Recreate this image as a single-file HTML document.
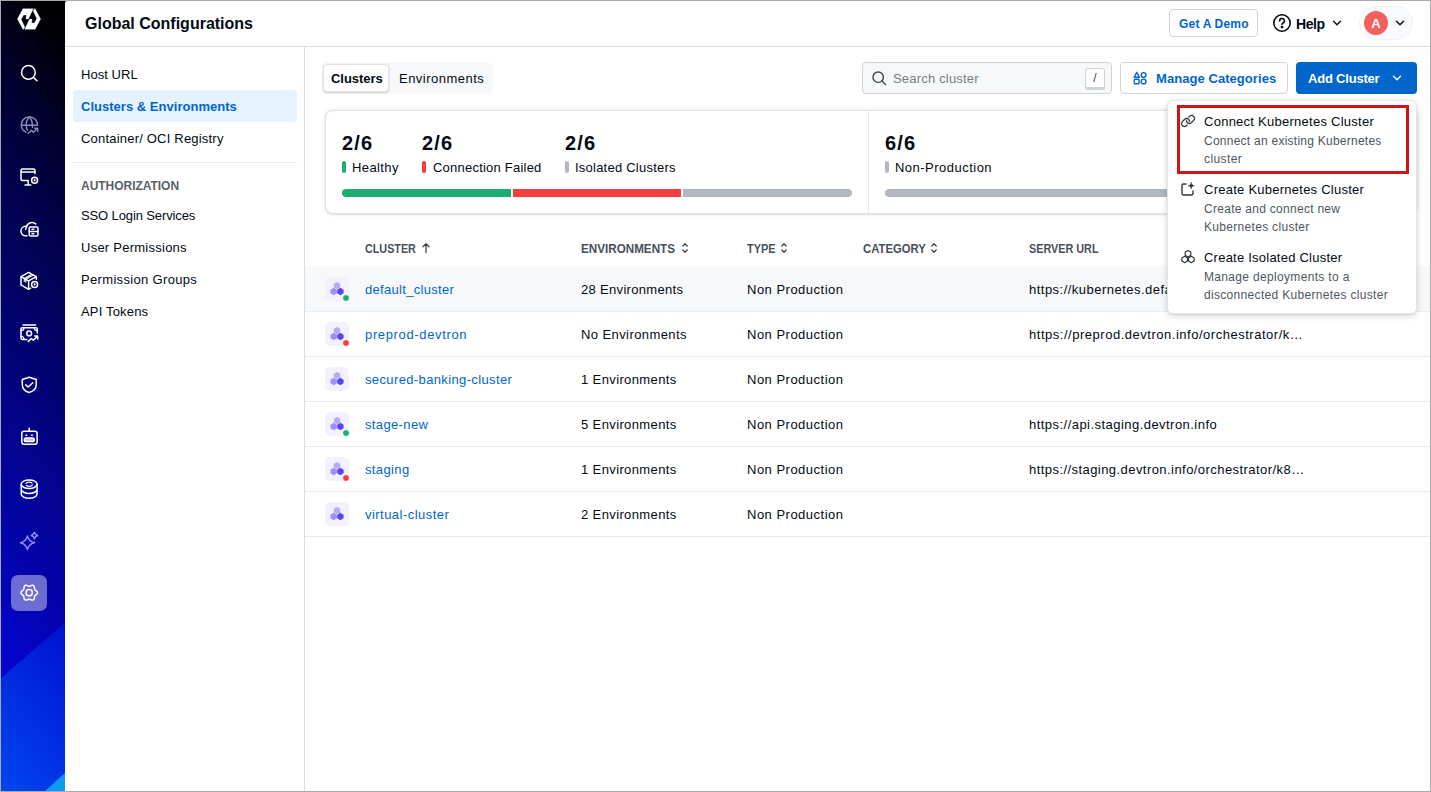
<!DOCTYPE html>
<html lang="en">
<head>
<meta charset="utf-8">
<title>Global Configurations</title>
<style>
*{box-sizing:border-box;margin:0;padding:0}
html,body{width:1431px;height:792px;overflow:hidden;background:#fff}
body{font-family:"Liberation Sans",sans-serif;font-size:13px;color:#000a14;position:relative}
.abs{position:absolute}
.t{position:absolute;white-space:nowrap;line-height:20px}
.sb{font-weight:700}
#frame{position:absolute;left:0;top:0;width:1431px;height:792px;border:1px solid #a9a9a9;z-index:100;pointer-events:none}
/* sidebar */
#side{position:absolute;left:0;top:0;width:80px;height:792px;background:#000008;overflow:hidden}
svg.ic{position:absolute;left:19px;width:20px;height:20px;fill:none;stroke:#fff;stroke-width:1.5;stroke-linecap:round;stroke-linejoin:round}
#main{position:absolute;left:65px;top:1px;width:1366px;height:791px;background:#fff;border-top-left-radius:2px}
#hdr{position:absolute;left:65px;top:1px;width:1366px;height:46px;border-bottom:1px solid #d9dde2;border-top-left-radius:2px}
#nav{position:absolute;left:65px;top:47px;width:240px;height:745px;border-right:1px solid #d9dde2}
.btn{position:absolute;border:1px solid #d0d4d9;border-radius:4px;background:#fff}
.row{position:absolute;left:305px;width:1126px;height:46px;border-bottom:1px solid #e8ebf0}
.tile{position:absolute;left:325px;width:24px;height:24px;border-radius:5px;background:#f3f0ff}
.dot{position:absolute;width:8px;height:8px;border-radius:50%;border:1px solid #fff}
.lnk{color:#0066cc}
.th{position:absolute;white-space:nowrap;line-height:20px;font-size:12px;font-weight:700;color:#47505a;top:239px;transform-origin:0 0}
.mk{position:absolute;width:4px;height:12px;border-radius:2px;top:161px}
.big{position:absolute;white-space:nowrap;font-size:20px;font-weight:700;line-height:30px;top:128px;color:#000a14}
.lbl{position:absolute;white-space:nowrap;line-height:20px;top:158px}
.bar{position:absolute;top:189px;height:8px}
.dt{position:absolute;left:1204px;white-space:nowrap;line-height:20px;font-size:13px;color:#000a14}
.dd{position:absolute;left:1204px;white-space:nowrap;line-height:18px;font-size:12px;color:#4d565e}
</style>
</head>
<body>
<div id="side">
<svg class="abs" style="left:0;top:0" width="66" height="792" viewBox="0 0 66 792">
<defs>
<linearGradient id="gv" x1="65" y1="0" x2="-358.400" y2="326.100" gradientUnits="userSpaceOnUse"><stop offset="0.000" stop-color="rgb(0,0,0)"/><stop offset="0.056" stop-color="rgb(0,0,8)"/><stop offset="0.159" stop-color="rgb(1,1,42)"/><stop offset="0.267" stop-color="rgb(1,1,72)"/><stop offset="0.350" stop-color="rgb(2,2,90)"/><stop offset="0.458" stop-color="rgb(2,2,114)"/><stop offset="0.571" stop-color="rgb(3,3,142)"/><stop offset="0.692" stop-color="rgb(3,3,170)"/><stop offset="0.804" stop-color="rgb(4,4,198)"/><stop offset="1.000" stop-color="rgb(5,5,244)"/></linearGradient>
<linearGradient id="gb" x1="65" y1="623" x2="-56.900" y2="721.400" gradientUnits="userSpaceOnUse">
<stop offset="0" stop-color="#0012cd"/><stop offset="1" stop-color="#0046f0"/>
</linearGradient>
</defs>
<rect width="66" height="792" fill="url(#gv)"/>
<polygon points="66,622 0,679 0,792 66,792" fill="url(#gb)"/>
<polygon points="66,772 44,792 66,792" fill="#0a9cf0"/>
</svg>
</div>
<!-- sidebar icons -->
<svg class="abs" style="left:16.400px;top:7.400px" width="26" height="24" viewBox="-13 -12 26 24" fill="#fff" stroke="#fff" stroke-width=".3" stroke-linejoin="round"><polygon points="-11.6,0 -6.1,-10.3 4.3,-10.3 -0.6,-0.1 -3.1,-0.1 -2.6,-4 -5.4,-4 -7.8,0.6 -4.2,8 -5.5,10.3 -6.1,10.3"/><polygon points="11.6,0 6.1,10.3 -4.3,10.3 0.6,0.1 3.1,0.1 2.6,4 5.4,4 7.8,-0.6 4.2,-8 5.5,-10.3 6.1,-10.3"/></svg>
<div id="icons">
<div class="abs" style="left:11px;top:575px;width:36px;height:36px;border-radius:7px;background:rgba(255,255,255,.42)"></div>
<svg class="abs" style="left:0;top:0" width="66" height="792" viewBox="0 0 66 792" fill="none" stroke="#fff" stroke-width="1.500" stroke-linecap="round" stroke-linejoin="round">
<g><circle cx="28.400" cy="72.400" r="6.850"/><path d="M33.400 77.400 37 80.700"/></g>
<g stroke="#8c8cba" stroke-width="1.400"><path d="M37.500 124.800A8.100 8.100 0 1 0 25.900 132.300"/><path d="M21.400 125.300H37.400M29.400 116.900C26.600 119.500 26 122.500 26.200 125.500 26.300 127.500 26.800 129 27.500 130.300M29.400 116.900C32 119.500 32.600 122.500 32.500 127.300"/><path d="M28.100 133.400 31.400 130.300 33.300 132.200 37.400 128.500M34.700 128.200 37.600 128.200 37.800 131.300"/></g>
<g><path d="M35 173.400V170.500A1.500 1.500 0 0 0 33.500 169H22.500A1.500 1.500 0 0 0 21 170.500V179A1.500 1.500 0 0 0 22.500 180.500H28.200V185.100M25 185.100H30.700M21 172H35"/><circle cx="34.600" cy="180.200" r="3"/><path d="M34 179.100v2.200l1.800-1.100z" fill="#fff" stroke-width=".5"/></g>
<g><path d="M27 235.800H25.700A4.750 4.750 0 1 1 25.700 226.300C26.100 226.300 26.500 226.350 26.800 226.450"/><path d="M25.700 229.200C26 225.700 28.500 222.500 32 222.500 33.400 222.500 34.700 223 35.700 223.900"/><rect x="29.200" y="227" width="8.800" height="9" rx="1.300"/><path d="M29.200 231.500H38M32 229.300H33.800M32 233.700H33.800"/></g>
<g><path d="M36.300 279.300V276.600L28.600 272.400 21 276.600V284.900L28.600 289.300 30.700 288.200M21 276.600 28.600 280.800 36.300 276.600M28.600 280.800V289.300"/><path d="M24.300 281.200V278.400L31.800 274.200M25.800 282V279.200L33.300 275" stroke-width="1.200"/><circle cx="34.600" cy="284.400" r="3"/><path d="M34 283.300v2.200l1.800-1.100z" fill="#fff" stroke-width=".5"/></g>
<g><path d="M23.100 325H35.600"/><path d="M37.300 333V329A1.300 1.300 0 0 0 36 327.700H22.300A1.300 1.300 0 0 0 21 329V338.100A1.300 1.300 0 0 0 22.300 339.400H26.900"/><circle cx="29.150" cy="333.400" r="2.400"/><path d="M21 330.700A3 3 0 0 0 24 327.700M37.300 330.700A3 3 0 0 1 34.300 327.700M21 336.400A3 3 0 0 1 24 339.400" stroke-width="1.200"/><path d="M28.300 341.400 31.400 338.500 33.300 340.200 37.300 336.400M34.700 335.900 37.600 335.900 37.800 339"/></g>
<g><path d="M29.150 377.200 22.300 379.500V384.700C22.300 388.700 25.200 391.300 29.150 392.500 33.100 391.300 36.200 388.700 36.200 384.700V379.500Z"/><path d="M25.700 384.900 28.200 387 32.800 382.800"/></g>
<g><rect x="21.800" y="431.300" width="15.300" height="12.900" rx="2.200"/><path d="M29.300 431.300V428.300"/><rect x="24.300" y="437.900" width="10" height="3.700" rx="1.850" fill="rgba(255,255,255,.75)"/><circle cx="26.300" cy="435.300" r=".95" fill="#fff" stroke="none"/><circle cx="32" cy="435.300" r=".95" fill="#fff" stroke="none"/></g>
<g><ellipse cx="29.150" cy="484.200" rx="7.900" ry="4.300"/><path d="M21.250 484.200V494C21.250 496.400 24.800 498.300 29.150 498.300S37.050 496.400 37.050 494V484.200M21.250 489.200C21.250 491.600 24.800 493.500 29.150 493.500S37.050 491.600 37.050 489.200"/><path d="M26 483.500C26.800 482.300 28.800 481.900 30.600 482.400L32 483M32.300 485C31.500 486.200 29.500 486.600 27.700 486.100L26.300 485.500" stroke-width="1.300"/></g>
<g stroke="#8f8bf2" stroke-width="1.400"><path d="M27.45 536.0 Q28.849999999999998 541.4399999999999 34.45 542.8 Q28.849999999999998 544.16 27.45 549.5999999999999 Q26.05 544.16 20.45 542.8 Q26.05 541.4399999999999 27.45 536.0Z"/><path d="M34.45 532.3 Q35.25 534.7 37.650000000000006 535.5 Q35.25 536.3 34.45 538.7 Q33.650000000000006 536.3 31.250000000000004 535.5 Q33.650000000000006 534.7 34.45 532.3Z"/></g>
<g><circle cx="29.200" cy="592.700" r="3.150"/><path d="M37.50 592.70 L37.34 593.41 L36.91 594.06 L36.30 594.60 L35.66 595.05 L35.12 595.46 L34.74 595.90 L34.55 596.44 L34.47 597.12 L34.40 597.90 L34.23 598.69 L33.89 599.39 L33.35 599.89 L32.65 600.11 L31.88 600.05 L31.10 599.80 L30.39 599.47 L29.77 599.20 L29.20 599.10 L28.63 599.20 L28.01 599.47 L27.30 599.80 L26.52 600.05 L25.75 600.11 L25.05 599.89 L24.51 599.39 L24.17 598.69 L24.00 597.90 L23.93 597.12 L23.85 596.44 L23.66 595.90 L23.28 595.46 L22.74 595.05 L22.10 594.60 L21.49 594.06 L21.06 593.41 L20.90 592.70 L21.06 591.99 L21.49 591.34 L22.10 590.80 L22.74 590.35 L23.28 589.94 L23.66 589.50 L23.85 588.96 L23.93 588.28 L24.00 587.50 L24.17 586.71 L24.51 586.01 L25.05 585.51 L25.75 585.29 L26.52 585.35 L27.30 585.60 L28.01 585.93 L28.63 586.20 L29.20 586.30 L29.77 586.20 L30.39 585.93 L31.10 585.60 L31.88 585.35 L32.65 585.29 L33.35 585.51 L33.89 586.01 L34.23 586.71 L34.40 587.50 L34.47 588.28 L34.55 588.96 L34.74 589.50 L35.12 589.94 L35.66 590.35 L36.30 590.80 L36.91 591.34 L37.34 591.99Z"/></g>
</svg>
</div>
<div id="main"></div>
<div id="hdr"></div>
<!-- header -->
<div class="t sb" id="title" style="left:85px;top:13px;font-size:16px;line-height:22px">Global Configurations</div>
<div class="btn" style="left:1169px;top:9px;width:89px;height:28px"></div>
<div class="t sb lnk" id="demo" style="left:1179px;top:14px;font-size:12px;letter-spacing:0.19px">Get A Demo</div>
<svg class="abs" style="left:1271.700px;top:12.500px" width="20" height="20" viewBox="0 0 20 20" fill="none" stroke="#000a14" stroke-width="1.6" stroke-linecap="round" stroke-linejoin="round"><circle cx="10" cy="10" r="8.2"/><path d="M7.6 7.9a2.4 2.4 0 1 1 3.3 2.2c-.6.3-.9.7-.9 1.4"/><circle cx="10" cy="14.1" r=".6" fill="#000a14"/></svg>
<div class="t sb" id="help" style="left:1296px;top:13.5px;font-size:14px;letter-spacing:-0.4px">Help</div>
<svg class="abs" style="left:1331px;top:17px" width="12" height="12" viewBox="0 0 12 12" fill="none" stroke="#000a14" stroke-width="1.4" stroke-linecap="round" stroke-linejoin="round"><path d="M2.5 4.3 6 7.8l3.5-3.5"/></svg>
<div class="abs" style="left:1359px;top:6px;width:54px;height:34px;border-radius:17px;background:#f9fafb;border:1px solid #eff1f5"></div>
<div class="abs" style="left:1364px;top:11px;width:24px;height:24px;border-radius:50%;background:#f3615e"></div>
<div class="t" id="ava" style="left:1364px;top:14px;width:24px;text-align:center;color:#fff;font-size:13px;font-weight:700">A</div>
<svg class="abs" style="left:1394px;top:17px" width="12" height="12" viewBox="0 0 12 12" fill="none" stroke="#000a14" stroke-width="1.4" stroke-linecap="round" stroke-linejoin="round"><path d="M2.5 4.3 6 7.8l3.5-3.5"/></svg>
<div id="nav"></div>
<!-- nav -->
<div class="abs" style="left:73px;top:90px;width:224px;height:32px;border-radius:4px;background:#e5f2ff"></div>
<div class="t" id="n1" style="left:81px;top:65px;letter-spacing:0.04px">Host URL</div>
<div class="t sb lnk" id="n2" style="left:81px;top:97px;letter-spacing:0.02px">Clusters &amp; Environments</div>
<div class="t" id="n3" style="left:81px;top:129px;letter-spacing:0.2px">Container/ OCI Registry</div>
<div class="abs" style="left:73px;top:162px;width:224px;height:1px;background:#e8ebf0"></div>
<div class="t sb" id="n4" style="left:81px;top:176px;font-size:12px;color:#596168;letter-spacing:-0.03px">AUTHORIZATION</div>
<div class="t" id="n5" style="left:81px;top:206px;letter-spacing:-0.12px">SSO Login Services</div>
<div class="t" id="n6" style="left:81px;top:238px;letter-spacing:0.25px">User Permissions</div>
<div class="t" id="n7" style="left:81px;top:270px;letter-spacing:0.33px">Permission Groups</div>
<div class="t" id="n8" style="left:81px;top:302px;letter-spacing:0.17px">API Tokens</div>
<!-- toolbar -->
<div class="abs" style="left:322px;top:62px;width:171px;height:32px;border-radius:6px;background:#f7f8fa"></div>
<div class="abs" style="left:323px;top:64px;width:66px;height:28px;border-radius:4px;background:#fff;border:1px solid #e0e3e8;box-shadow:0 1px 2px rgba(0,0,0,.18)"></div>
<div class="t sb" id="tab1" style="left:331px;top:69px;letter-spacing:-0.04px">Clusters</div>
<div class="t" id="tab2" style="left:399px;top:69px;letter-spacing:0.48px">Environments</div>
<div class="abs" style="left:862px;top:62px;width:250px;height:32px;border-radius:4px;background:#f7f8fa;border:1px solid #d0d4d9"></div>
<svg class="abs" style="left:871px;top:70px" width="16" height="16" viewBox="0 0 16 16" fill="none" stroke="#3b444c" stroke-width="1.4" stroke-linecap="round"><circle cx="7.200" cy="7.200" r="5.200"/><path d="M11 11l3.500 3.500"/></svg>
<div class="t" id="ph" style="left:893px;top:69px;color:#767d84;letter-spacing:0.19px">Search cluster</div>
<div class="abs" style="left:1085px;top:68px;width:20px;height:22px;border-radius:3px;background:#fff;border:1px solid #d0d4d9;border-bottom-width:3px"></div>
<div class="t" style="left:1085px;top:68px;width:20px;text-align:center;font-size:12px;color:#3b444c">/</div>
<div class="btn" style="left:1120px;top:62px;width:168px;height:32px"></div>
<svg class="abs" style="left:1132px;top:70px" width="16" height="16" viewBox="0 0 16 16" fill="none" stroke="#0066cc" stroke-width="1.4" stroke-linejoin="round"><path d="M4.750 2.300 7.400 7.300H2.100z"/><circle cx="11.600" cy="5" r="2.400"/><rect x="2.200" y="9.200" width="4.900" height="4.600" rx=".8"/><circle cx="11.600" cy="11.500" r="2.400"/></svg>
<div class="t sb lnk" id="mc" style="left:1156px;top:69px;letter-spacing:0.06px">Manage Categories</div>
<div class="abs" style="left:1296px;top:62px;width:121px;height:32px;border-radius:4px;background:#0066cc"></div>
<div class="t sb" id="ac" style="left:1308px;top:69px;color:#fff;letter-spacing:-0.2px">Add Cluster</div>
<svg class="abs" style="left:1391px;top:72px" width="12" height="12" viewBox="0 0 12 12" fill="none" stroke="#fff" stroke-width="1.4" stroke-linecap="round" stroke-linejoin="round"><path d="M2.500 4.300 6 7.800l3.500-3.500"/></svg>
<!-- summary card -->
<div class="abs" id="card" style="left:325px;top:110px;width:1092px;height:104px;border-radius:8px;background:#fff;border:1px solid #dfe2e6;box-shadow:0 0 4px rgba(0,0,0,.13),0 1px 2px rgba(0,0,0,.06)"></div>
<div class="abs" style="left:868px;top:111px;width:1px;height:102px;background:#e8ebf0"></div>
<div class="big" id="b1" style="left:342px;letter-spacing:1.13px">2/6</div>
<div class="big" id="b2" style="left:422px;letter-spacing:1.13px">2/6</div>
<div class="big" id="b3" style="left:565px;letter-spacing:1.13px">2/6</div>
<div class="big" id="b4" style="left:885px;letter-spacing:1.13px">6/6</div>
<div class="mk" style="left:342px;background:#1dad70"></div>
<div class="mk" style="left:422px;background:#f33e3e"></div>
<div class="mk" style="left:565px;background:#b1b7bc"></div>
<div class="mk" style="left:885px;background:#b1b7bc"></div>
<div class="lbl" id="l1" style="left:352px;letter-spacing:0.39px">Healthy</div>
<div class="lbl" id="l2" style="left:433px;letter-spacing:0.22px">Connection Failed</div>
<div class="lbl" id="l3" style="left:575px;letter-spacing:0.23px">Isolated Clusters</div>
<div class="lbl" id="l4" style="left:895px;letter-spacing:0.48px">Non-Production</div>
<div class="bar" style="left:342px;width:169px;background:#1dad70;border-radius:4px 0 0 4px"></div>
<div class="bar" style="left:513px;width:168px;background:#f33e3e"></div>
<div class="bar" style="left:683px;width:169px;background:#b1b7bc;border-radius:0 4px 4px 0"></div>
<div class="bar" style="left:885px;width:515px;background:#b1b7bc;border-radius:4px"></div>
<!-- table -->
<div class="th" id="h1" style="left:365px;transform:scaleX(0.898)">CLUSTER</div>
<svg class="abs" style="left:420px;top:241px" width="12" height="14" viewBox="0 0 12 14" fill="none" stroke="#3b444c" stroke-width="1.3" stroke-linecap="round" stroke-linejoin="round"><path d="M6 11.500V3M3 5.800 6 2.800l3 3"/></svg>
<div class="th" id="h2" style="left:581px;transform:scaleX(0.972)">ENVIRONMENTS</div>
<svg class="abs" style="left:680px;top:241px" width="10" height="14" viewBox="0 0 10 14" fill="none" stroke="#3b444c" stroke-width="1.3" stroke-linecap="round" stroke-linejoin="round"><path d="M2.800 5 5 2.800 7.200 5M2.800 9 5 11.200 7.200 9"/></svg>
<div class="th" id="h3" style="left:747px;transform:scaleX(0.907)">TYPE</div>
<svg class="abs" style="left:779px;top:241px" width="10" height="14" viewBox="0 0 10 14" fill="none" stroke="#3b444c" stroke-width="1.3" stroke-linecap="round" stroke-linejoin="round"><path d="M2.800 5 5 2.800 7.200 5M2.800 9 5 11.200 7.200 9"/></svg>
<div class="th" id="h4" style="left:863px;transform:scaleX(0.943)">CATEGORY</div>
<svg class="abs" style="left:929px;top:241px" width="10" height="14" viewBox="0 0 10 14" fill="none" stroke="#3b444c" stroke-width="1.3" stroke-linecap="round" stroke-linejoin="round"><path d="M2.800 5 5 2.800 7.200 5M2.800 9 5 11.200 7.200 9"/></svg>
<div class="th" id="h5" style="left:1029px;transform:scaleX(0.901)">SERVER URL</div>
<div class="row" style="top:266px;background:#f7f8fa"></div>
<div class="tile" style="top:277px"></div>
<svg class="abs" style="left:330px;top:281px" width="16" height="16" viewBox="0 0 16 16"><polygon points="7.00,0.90 10.20,2.75 10.20,6.45 7.00,8.30 3.80,6.45 3.80,2.75" fill="#b4acf6"/><polygon points="3.70,6.80 6.90,8.65 6.90,12.35 3.70,14.20 0.50,12.35 0.50,8.65" fill="#9d90f8"/><polygon points="10.40,6.80 13.60,8.65 13.60,12.35 10.40,14.20 7.20,12.35 7.20,8.65" fill="#5a45f2"/></svg>
<div class="dot" style="left:342px;top:294px;background:#1dad70"></div>
<div class="t lnk" id="r0a" style="left:365px;top:280px;letter-spacing:0.31px">default_cluster</div>
<div class="t" id="r0b" style="left:581px;top:280px;letter-spacing:0.32px">28 Environments</div>
<div class="t" id="r0c" style="left:747px;top:280px;letter-spacing:0.49px">Non Production</div>
<div class="t" id="r0d" style="left:1029px;top:280px;letter-spacing:0.48px">https://kubernetes.default.svc</div>
<div class="row" style="top:311px"></div>
<div class="tile" style="top:322px"></div>
<svg class="abs" style="left:330px;top:326px" width="16" height="16" viewBox="0 0 16 16"><polygon points="7.00,0.90 10.20,2.75 10.20,6.45 7.00,8.30 3.80,6.45 3.80,2.75" fill="#b4acf6"/><polygon points="3.70,6.80 6.90,8.65 6.90,12.35 3.70,14.20 0.50,12.35 0.50,8.65" fill="#9d90f8"/><polygon points="10.40,6.80 13.60,8.65 13.60,12.35 10.40,14.20 7.20,12.35 7.20,8.65" fill="#5a45f2"/></svg>
<div class="dot" style="left:342px;top:339px;background:#f33e3e"></div>
<div class="t lnk" id="r1a" style="left:365px;top:325px;letter-spacing:0.65px">preprod-devtron</div>
<div class="t" id="r1b" style="left:581px;top:325px;letter-spacing:0.41px">No Environments</div>
<div class="t" id="r1c" style="left:747px;top:325px;letter-spacing:0.49px">Non Production</div>
<div class="t" id="r1d" style="left:1029px;top:325px;letter-spacing:0.52px">https://preprod.devtron.info/orchestrator/k…</div>
<div class="row" style="top:356px"></div>
<div class="tile" style="top:367px"></div>
<svg class="abs" style="left:330px;top:371px" width="16" height="16" viewBox="0 0 16 16"><polygon points="7.00,0.90 10.20,2.75 10.20,6.45 7.00,8.30 3.80,6.45 3.80,2.75" fill="#b4acf6"/><polygon points="3.70,6.80 6.90,8.65 6.90,12.35 3.70,14.20 0.50,12.35 0.50,8.65" fill="#9d90f8"/><polygon points="10.40,6.80 13.60,8.65 13.60,12.35 10.40,14.20 7.20,12.35 7.20,8.65" fill="#5a45f2"/></svg>
<div class="t lnk" id="r2a" style="left:365px;top:370px;letter-spacing:0.37px">secured-banking-cluster</div>
<div class="t" id="r2b" style="left:581px;top:370px;letter-spacing:0.38px">1 Environments</div>
<div class="t" id="r2c" style="left:747px;top:370px;letter-spacing:0.49px">Non Production</div>
<div class="row" style="top:401px"></div>
<div class="tile" style="top:412px"></div>
<svg class="abs" style="left:330px;top:416px" width="16" height="16" viewBox="0 0 16 16"><polygon points="7.00,0.90 10.20,2.75 10.20,6.45 7.00,8.30 3.80,6.45 3.80,2.75" fill="#b4acf6"/><polygon points="3.70,6.80 6.90,8.65 6.90,12.35 3.70,14.20 0.50,12.35 0.50,8.65" fill="#9d90f8"/><polygon points="10.40,6.80 13.60,8.65 13.60,12.35 10.40,14.20 7.20,12.35 7.20,8.65" fill="#5a45f2"/></svg>
<div class="dot" style="left:342px;top:429px;background:#1dad70"></div>
<div class="t lnk" id="r3a" style="left:365px;top:415px;letter-spacing:0.36px">stage-new</div>
<div class="t" id="r3b" style="left:581px;top:415px;letter-spacing:0.38px">5 Environments</div>
<div class="t" id="r3c" style="left:747px;top:415px;letter-spacing:0.49px">Non Production</div>
<div class="t" id="r3d" style="left:1029px;top:415px;letter-spacing:0.46px">https://api.staging.devtron.info</div>
<div class="row" style="top:446px"></div>
<div class="tile" style="top:457px"></div>
<svg class="abs" style="left:330px;top:461px" width="16" height="16" viewBox="0 0 16 16"><polygon points="7.00,0.90 10.20,2.75 10.20,6.45 7.00,8.30 3.80,6.45 3.80,2.75" fill="#b4acf6"/><polygon points="3.70,6.80 6.90,8.65 6.90,12.35 3.70,14.20 0.50,12.35 0.50,8.65" fill="#9d90f8"/><polygon points="10.40,6.80 13.60,8.65 13.60,12.35 10.40,14.20 7.20,12.35 7.20,8.65" fill="#5a45f2"/></svg>
<div class="dot" style="left:342px;top:474px;background:#f33e3e"></div>
<div class="t lnk" id="r4a" style="left:365px;top:460px;letter-spacing:0.37px">staging</div>
<div class="t" id="r4b" style="left:581px;top:460px;letter-spacing:0.38px">1 Environments</div>
<div class="t" id="r4c" style="left:747px;top:460px;letter-spacing:0.49px">Non Production</div>
<div class="t" id="r4d" style="left:1029px;top:460px;letter-spacing:0.44px">https://staging.devtron.info/orchestrator/k8…</div>
<div class="row" style="top:491px"></div>
<div class="tile" style="top:502px"></div>
<svg class="abs" style="left:330px;top:506px" width="16" height="16" viewBox="0 0 16 16"><polygon points="7.00,0.90 10.20,2.75 10.20,6.45 7.00,8.30 3.80,6.45 3.80,2.75" fill="#b4acf6"/><polygon points="3.70,6.80 6.90,8.65 6.90,12.35 3.70,14.20 0.50,12.35 0.50,8.65" fill="#9d90f8"/><polygon points="10.40,6.80 13.60,8.65 13.60,12.35 10.40,14.20 7.20,12.35 7.20,8.65" fill="#5a45f2"/></svg>
<div class="t lnk" id="r5a" style="left:365px;top:505px;letter-spacing:0.46px">virtual-cluster</div>
<div class="t" id="r5b" style="left:581px;top:505px;letter-spacing:0.38px">2 Environments</div>
<div class="t" id="r5c" style="left:747px;top:505px;letter-spacing:0.49px">Non Production</div>
<!-- dropdown -->
<div class="abs" id="menu" style="left:1167px;top:100px;width:250px;height:214px;border-radius:6px;background:#fff;border:1px solid #e3e6ea;box-shadow:0 2px 7px rgba(0,0,0,.15),0 1px 2px rgba(0,0,0,.08)"></div>
<div class="abs" style="left:1177px;top:105px;width:232px;height:69px;border:3px solid #d01317"></div>
<svg class="abs" style="left:1180px;top:113px" width="16" height="16" viewBox="0 0 256 256" fill="#2c3640" stroke="#2c3640" stroke-width="5"><path d="M240,88.230a54.430,54.430,0,0,1-16,37L189.250,160a54.270,54.270,0,0,1-38.630,16h-.050A54.630,54.630,0,0,1,96,119.840a8,8,0,0,1,16,.450A38.620,38.620,0,0,0,150.580,160h0a38.390,38.390,0,0,0,27.310-11.310l34.750-34.750a38.630,38.630,0,0,0-54.630-54.630l-11,11A8,8,0,0,1,135.700,59l11-11A54.650,54.650,0,0,1,224,48,54.860,54.860,0,0,1,240,88.230ZM109,185.660l-11,11A38.410,38.410,0,0,1,70.600,208h0a38.630,38.630,0,0,1-27.290-65.940L78,107.310A38.630,38.630,0,0,1,144,135.710a8,8,0,0,0,16,.450A54.860,54.860,0,0,0,144,96a54.650,54.650,0,0,0-77.270,0L32,130.750A54.620,54.620,0,0,0,70.560,224h0a54.280,54.280,0,0,0,38.640-16l11-11A8,8,0,0,0,109,185.660Z"/></svg>
<div class="dt" id="d1" style="top:112px;letter-spacing:0.26px">Connect Kubernetes Cluster</div>
<div class="dd" id="d1a" style="top:132px;letter-spacing:0.25px">Connect an existing Kubernetes</div>
<div class="dd" id="d1b" style="top:150px;letter-spacing:0.41px">cluster</div>
<svg class="abs" style="left:1180px;top:181px" width="16" height="16" viewBox="0 0 16 16" fill="none" stroke="#2c3640" stroke-width="1.400" stroke-linecap="round" stroke-linejoin="round"><path d="M6 3H3.500A1.500 1.500 0 0 0 2 4.500v8A1.500 1.500 0 0 0 3.500 14h8a1.500 1.500 0 0 0 1.500-1.500V10"/><path d="M11.200 1.700c.35 1.900 1.150 2.700 3.050 3.050-1.900.35-2.700 1.150-3.050 3.050-.35-1.900-1.150-2.700-3.050-3.050 1.900-.35 2.700-1.150 3.050-3.050z" fill="#2c3640" stroke-width=".6"/></svg>
<div class="dt" id="d2" style="top:180px;letter-spacing:0.25px">Create Kubernetes Cluster</div>
<div class="dd" id="d2a" style="top:200px;letter-spacing:0.28px">Create and connect new</div>
<div class="dd" id="d2b" style="top:218px;letter-spacing:0.31px">Kubernetes cluster</div>
<svg class="abs" style="left:1180px;top:249px" width="16" height="16" viewBox="0 0 16 16" fill="none" stroke="#2c3640" stroke-width="1.200" stroke-linejoin="round"><polygon points="8,1.500 10.800,3.100 10.800,6.300 8,7.900 5.200,6.300 5.200,3.100"/><polygon points="4.700,7.300 7.500,8.900 7.500,12.100 4.700,13.700 1.900,12.100 1.900,8.900"/><polygon points="11.300,7.300 14.100,8.900 14.100,12.100 11.300,13.700 8.500,12.100 8.500,8.900"/></svg>
<div class="dt" id="d3" style="top:248px;letter-spacing:0.23px">Create Isolated Cluster</div>
<div class="dd" id="d3a" style="top:268px;letter-spacing:0.33px">Manage deployments to a</div>
<div class="dd" id="d3b" style="top:286px;letter-spacing:0.32px">disconnected Kubernetes cluster</div>
<div id="frame"></div>
</body>
</html>
